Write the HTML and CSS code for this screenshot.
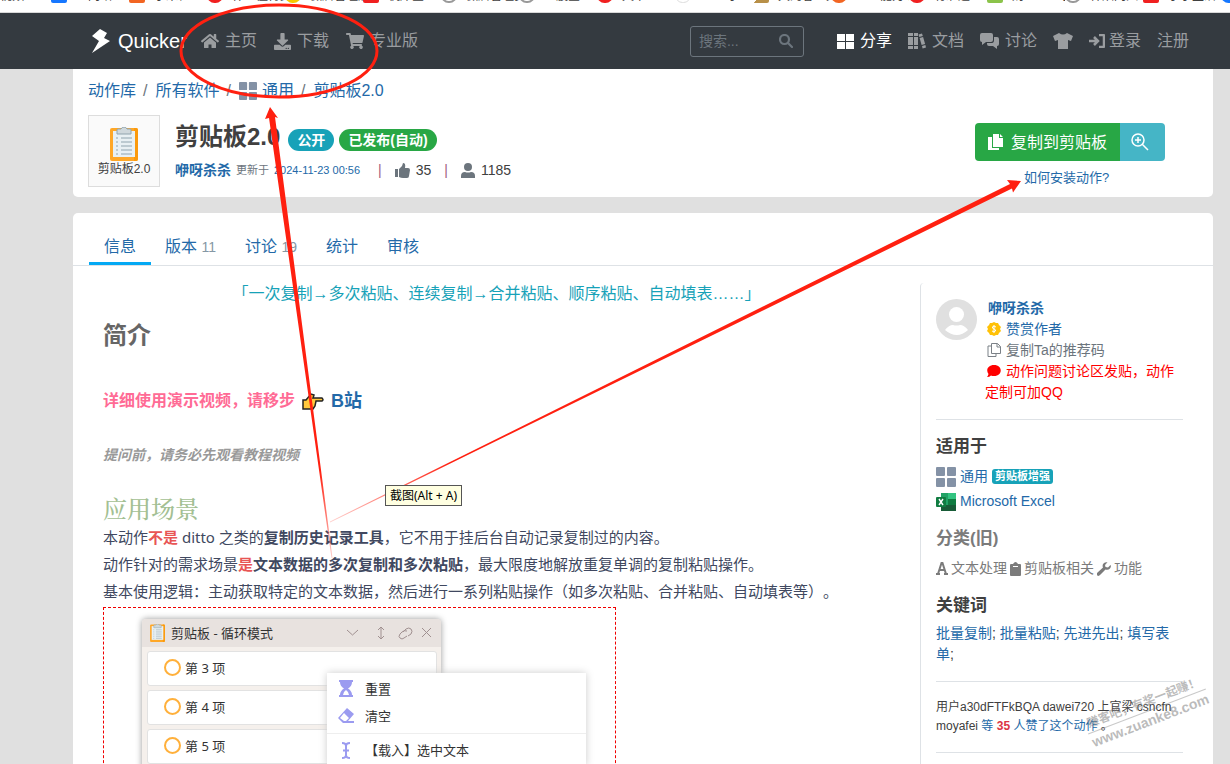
FILE: index.html
```html
<!DOCTYPE html>
<html lang="zh-CN">
<head>
<meta charset="utf-8">
<title>剪贴板2.0 - Quicker</title>
<link rel="stylesheet" href="styles.css">
</head>
<body>
<svg class="defs" aria-hidden="true">
  <symbol id="grid" viewBox="0 0 20 20"><path d="M0 1q0-1 1-1h7q1 0 1 1v7q0 1-1 1H1q-1 0-1-1zM11 1q0-1 1-1h7q1 0 1 1v7q0 1-1 1h-7q-1 0-1-1zM0 12q0-1 1-1h7q1 0 1 1v7q0 1-1 1H1q-1 0-1-1zM11 12q0-1 1-1h7q1 0 1 1v7q0 1-1 1h-7q-1 0-1-1z"/></symbol>
  <symbol id="clip" viewBox="0 0 28 34"><rect x="0" y="1" width="28" height="33" rx="2" fill="#ffa726"/><path d="M24 1h2q2 0 2 2v29q0 2-2 2h-2z" fill="#fb9a0c"/><rect x="3" y="4" width="22" height="26" fill="#e8f0f3"/><path d="M7 7V3q0-1 1-1h3q1-2 3-2t3 2h3q1 0 1 1v4z" fill="#cfd8dc" stroke="#90a4ae"/><path d="M6 11h2M6 15h2M6 19h2M6 23h2M6 27h2M11 11h11M11 15h11M11 19h11M11 23h11M11 27h11" stroke="#90a4ae"/></symbol>
</svg>
<div class="page">
  <div class="bookmarks">
    <span>视频</span><span><i class="blue"></i>王网站</span><span><i class="orange"></i>小米社</span><span><i class="red round"></i>什么值得买</span><span><i class="yellow round"></i>微店管理后</span><span><i class="red"></i>机床企业</span><span><i class="globe"></i>微店管理员</span><span><i class="globe"></i>个股企业工</span><span><i class="red round"></i>天下</span><span><i class="pale"></i>个个 小</span><span><i class="gold"></i>大淘客工具</span><span><i class="orange round"></i>一个能力下</span><span><i class="red round"></i>有准达人</span><span><i class="green"></i>购个个一小</span><span><i class="globe"></i>神烟网入</span><span><i class="red"></i>小小生活工</span><span><i class="blue round"></i></span>
  </div>

  <header class="navbar">
    <a class="brand" href="#"><svg width="18" height="24" viewBox="0 0 18 24"><path d="M8 0 0 7l7 5L0 24 18 12l-6-3 3-5z" fill="#fff"/></svg>Quicker</a>
    <nav class="nav">
      <a href="#"><svg width="18" height="16" viewBox="0 0 576 512"><path d="M280 148 96 300v164a16 16 0 0 0 16 16h112a16 16 0 0 0 16-16v-96h96v96a16 16 0 0 0 16 16h112a16 16 0 0 0 16-16V300L296 148a12 12 0 0 0-16 0zM572 251l-84-69V44a12 12 0 0 0-12-12h-56a12 12 0 0 0-12 12v72l-90-74a48 48 0 0 0-61 0L4 251a12 12 0 0 0-1 17l25 31a12 12 0 0 0 17 2L280 107a12 12 0 0 1 16 0l235 194a12 12 0 0 0 17-2l25-31a12 12 0 0 0-1-17z"/></svg>主页</a>
      <a href="#"><svg width="17" height="17" viewBox="0 0 512 512"><path d="M216 0h80c13 0 24 11 24 24v168h88c18 0 27 22 14 34L270 378c-7 7-20 7-28 0L90 226c-13-12-4-34 14-34h88V24c0-13 11-24 24-24zm296 376v112c0 13-11 24-24 24H24c-13 0-24-11-24-24V376c0-13 11-24 24-24h147l49 49c20 20 52 20 72 0l49-49h147c13 0 24 11 24 24zM388 464a20 20 0 1 0-40 0 20 20 0 0 0 40 0zm64 0a20 20 0 1 0-40 0 20 20 0 0 0 40 0z"/></svg>下载</a>
      <a href="#"><svg width="18" height="16" viewBox="0 0 576 512"><path d="m528 301 47-208a24 24 0 0 0-23-29H159L150 19A24 24 0 0 0 126 0H24A24 24 0 0 0 0 24v16a24 24 0 0 0 24 24h70l70 343a56 56 0 1 0 67 9h210a56 56 0 1 0 64-10l5-25a24 24 0 0 0-23-29H218l-7-32h294a24 24 0 0 0 23-19z"/></svg>专业版</a>
    </nav>
    <form class="search"><input type="text" placeholder="搜索..." aria-label="搜索"><button type="button" aria-label="搜索"><svg width="14" height="14" viewBox="0 0 14 14"><path d="M5.500 10a4.500 4.500 0 1 1 0-9 4.500 4.500 0 0 1 0 9zM9 9l4 4" fill="none" stroke="#6c757d" stroke-width="2.200" stroke-linecap="round"/></svg></button></form>
    <nav class="nav account">
      <a class="current" href="#"><svg width="17" height="15" viewBox="0 0 17 15"><path d="M0 0h8v7H0zM9 0h8v7H9zM0 8h8v7H0zM9 8h8v7H9z"/></svg>分享</a>
      <a href="#"><svg width="18" height="16" viewBox="0 0 18 16"><path d="M0 0h5v3H0zM0 4h5v8H0zM0 13h5v3H0zM6 0h4v3H6zM6 4h4v8H6zM6 13h4v3H6zM10.500 1.500l3.500-1 .8 2.500-3.500 1zM11.600 5l3.500-1 2 7-3.500 1zM14 13l3.400-1 .6 2.500-3.400 1z"/></svg>文档</a>
      <a href="#"><svg width="19" height="16" viewBox="0 0 19 16"><path d="M2 0h9q2 0 2 2v5q0 2-2 2H6l-4 3V9Q0 9 0 7V2q0-2 2-2zM14 4h3q2 0 2 2v5q0 2-2 2v3l-4-3H9q-2 0-2-2l0-1h5q2 0 2-3z"/></svg>讨论</a>
      <a href="#" aria-label="周边"><svg width="20" height="16" viewBox="0 0 20 16"><path d="M6 0q4 3 8 0l6 3-2 5-3-1v9H5V7L2 8 0 3z"/></svg></a>
      <a class="login" href="#"><svg width="16" height="14" viewBox="0 0 16 14"><path d="M0 7h9M5 3l4 4-4 4M10 1h4q1 0 1 1v10q0 1-1 1h-4" fill="none" stroke="#9a9da0" stroke-width="2.500"/></svg>登录</a>
      <a href="#">注册</a>
    </nav>
  </header>

  <main class="container">
    <section class="card summary">
      <nav class="crumbs"><a href="#">动作库</a><span>/</span><a href="#">所有软件</a><span>/</span><a href="#"><svg width="18" height="18" fill="#8492a6"><use href="#grid"/></svg>通用</a><span>/</span><a href="#">剪贴板2.0</a></nav>
      <div class="product">
        <div class="tile"><svg width="28" height="34"><use href="#clip"/></svg><span>剪贴板2.0</span></div>
        <div class="heading">
          <div class="title-row"><h1>剪贴板2.0</h1><span class="pill teal">公开</span><span class="pill">已发布(自动)</span></div>
          <div class="meta"><a class="author" href="#">咿呀杀杀</a><small>更新于</small><a class="date" href="#">2024-11-23 00:56</a><i>|</i><svg width="15" height="15" viewBox="0 0 15 15"><path d="M0 6h3v8H0zM4 6l3-3 1-3q3 0 2 5h3q2 0 2 2l-1 6q0 2-2 2H8q-2 0-4-1z"/></svg><span>35</span><i>|</i><svg width="14" height="15" viewBox="0 0 14 15"><circle cx="7" cy="4" r="4"/><path d="M0 15v-2q0-4 4-4 3 1 6 0 4 0 4 4v2z"/></svg><span>1185</span></div>
        </div>
        <div class="install">
          <div class="buttons"><button type="button" class="copy"><svg width="15" height="17" viewBox="0 0 15 17"><path d="M5 0h6v4h4v9H5zM12 0l3 3h-3zM0 3h4v11h7v2H0z" fill="#fff"/></svg>复制到剪贴板</button><button type="button" class="look" aria-label="查看"><svg width="18" height="18" viewBox="0 0 18 18"><path d="M13 7A6 6 0 1 1 1 7a6 6 0 0 1 12 0zM11.500 11.500 17 17M7 4v6M4 7h6" fill="none" stroke="#fff" stroke-width="1.500"/></svg></button></div>
          <a href="#">如何安装动作?</a>
        </div>
      </div>
    </section>

    <section class="card detail">
      <nav class="tabs"><a class="active" href="#">信息</a><a href="#">版本 <small>11</small></a><a href="#">讨论 <small>19</small></a><a href="#">统计</a><a href="#">审核</a></nav>
      <div class="columns">
        <article>
          <p class="slogan">「一次复制→多次粘贴、连续复制→合并粘贴、顺序粘贴、自动填表……」</p>
          <h2>简介</h2>
          <p class="video">详细使用演示视频，请移步 <svg width="22" height="18" viewBox="0 0 22 18"><path d="M1 8h3l5-6 3 1-1 3h9q2 2 0 3h-6l-1 5-2 3H1z" fill="#ffc83d" stroke="#222" stroke-width="1.500"/></svg> <a href="#">B站</a></p>
          <p class="hint">提问前，请务必先观看教程视频</p>
          <h3>应用场景</h3>
          <div class="copytext">
            <p>本动作<em>不是</em> ditto 之类的<b>复制历史记录工具</b>，它不用于挂后台自动记录复制过的内容。</p>
            <p>动作针对的需求场景<em>是</em><b>文本数据的多次复制和多次粘贴</b>，最大限度地解放重复单调的复制粘贴操作。</p>
            <p>基本使用逻辑：主动获取特定的文本数据，然后进行一系列粘贴操作（如多次粘贴、合并粘贴、自动填表等）。</p>
          </div>
          <div class="figure">
            <div class="window">
              <div class="window-bar"><svg width="15" height="18" viewBox="0 0 28 34"><use href="#clip"/></svg><span>剪贴板 - 循环模式</span>
                <svg width="84" height="14" viewBox="0 0 84 14" fill="none" stroke="#a09090"><path d="M0 4l5.500 5L11 4M34 1v12M31 4l3-3 3 3M31 10l3 3 3-3M75 2l9 9M84 2l-9 9"/><path d="M56 6l3-3q3-2 5 0t0 5l-3 2M60 5q-3-1-5 1l-2 2q-2 3 0 4 2 2 4 0l3-2"/></svg></div>
              <div class="item"><i></i>第 3 项</div>
              <div class="item"><i></i>第 4 项</div>
              <div class="item"><i></i>第 5 项</div>
            </div>
            <div class="popup">
              <div><svg width="14" height="17" viewBox="0 0 14 17"><path fill-rule="evenodd" d="M0 0h14v2h-1q0 4-4 6.500 4 2.500 4 6.500h1v2H0v-2h1q0-4 4-6.500Q1 6 1 2H0zM7 10q-3 2-3 5h6q0-3-3-5z"/></svg>重置</div>
              <div><svg width="17" height="15" viewBox="0 0 17 15"><path d="M9 0l7 6-6 7h6v2H5L0 10zM6 5l-4 5 4 3h2l3-3z" fill-rule="evenodd"/></svg>清空</div>
              <div class="split"><svg width="10" height="17" viewBox="0 0 10 17"><path d="M1 1q4 0 4 3v9q0 3-4 3M9 1q-4 0-4 3M9 16q-4 0-4-3M2 8.500h6" fill="none" stroke="#9b9bf0" stroke-width="2"/></svg>【载入】选中文本</div>
            </div>
          </div>
        </article>

        <aside>
          <div class="profile">
            <svg class="avatar" width="41" height="41" viewBox="0 0 41 41"><circle cx="20.500" cy="20.500" r="20.500" fill="#e0e0e0"/><circle cx="20.500" cy="15.500" r="7.500" fill="#fff"/><path d="M9 31q4-5 8-5 3.500 1 7 0 4 0 8 5-11 10-23 0z" fill="#fff"/></svg>
            <div class="profile-text">
              <a class="author" href="#">咿呀杀杀</a>
              <a href="#"><svg width="14" height="14" viewBox="0 0 14 14"><path d="M7 0l2 1 2 0 1 2 2 2-1 2 1 2-2 2-1 2H9l-2 1-2-1H3l-1-2-2-2 1-2-1-2 2-2 1-2h2z" fill="#ffc107"/><path d="M9 5Q7 3.500 5.500 4.800 5 6.500 7 7t1.500 2Q7 10.500 5 9M7 3v8" fill="none" stroke="#fff"/></svg>赞赏作者</a>
              <a class="muted" href="#"><svg width="14" height="14" viewBox="0 0 14 14"><path d="M4.500.5h6l3 3v7h-9zM10 .5V4h3.500M4.500 3H1v10.500h8V11" fill="none" stroke="#7b8187"/></svg>复制Ta的推荐码</a>
              <a class="notice" href="#"><svg width="14" height="14" viewBox="0 0 14 14"><path d="M7 1c9 0 9 11 0 11q-2 0-3-.5Q2.500 13 0 13q1-1 1.500-3C-1.500 6 1 1 7 1z"/></svg>动作问题讨论区发贴，动作定制可加QQ</a>
            </div>
          </div>
          <hr>
          <h4>适用于</h4>
          <div class="app"><svg width="20" height="20" fill="#8492a6"><use href="#grid"/></svg><a href="#">通用</a><span class="tag">剪贴板增强</span></div>
          <div class="app"><svg width="20" height="20" viewBox="0 0 20 20"><path d="M5 1h15v18H5z" fill="#21a366"/><path d="M12 1h8v6h-8z" fill="#33c481"/><path d="M5 13h15v6H5z" fill="#185c37"/><path d="M12 7h8v6h-8z" fill="#107c41"/><rect y="5" width="10" height="10" rx="1" fill="#107c41"/><path d="M3 7l4 6M7 7l-4 6" stroke="#fff" stroke-width="1.400"/></svg><a href="#">Microsoft Excel</a></div>
          <h4 class="old">分类(旧)</h4>
          <div class="cats"><svg width="12" height="13" viewBox="0 0 12 13"><path d="M0 12h4M8 12h4M2 12 5.500 1h1L10 12M4 8h5" fill="none" stroke="#7b7b7b" stroke-width="2"/></svg><a href="#">文本处理</a><svg width="11" height="14" viewBox="0 0 11 14"><path d="M0 3q0-1 1-1h2q2.500-4 5 0h2q1 0 1 1v10q0 1-1 1H1q-1 0-1-1zM3 4v1h5V4z" fill-rule="evenodd"/></svg><a href="#">剪贴板相关</a><svg width="14" height="14" viewBox="0 0 14 14"><path d="M13.500 3 11 5.500 8.500 5 8 3l2.500-2.700Q8 0 6.500 1.500T6 5.500L0 11q-.5 2 1 3 1 0 2-1l5.500-5.500Q11 8.500 13 6.500 14.500 4.500 13.500 3z"/></svg><a href="#">功能</a></div>
          <h4>关键词</h4>
          <p class="keywords"><a href="#">批量复制</a>; <a href="#">批量粘贴</a>; <a href="#">先进先出</a>; <a href="#">填写表单</a>;</p>
          <hr>
          <p class="likes">用户a30dFTFkBQA dawei720 上官梁 csncfn moyafei <a href="#">等 <b>35</b> 人赞了这个动作</a> 。</p>
          <hr>
        </aside>
      </div>
    </section>
  </main>

  <div class="watermark"><span>赚客吧，有奖一起赚！</span><span>www.zuanke8.com</span></div>
  <svg class="marks" width="1230" height="764" viewBox="0 0 1230 764">
    <defs>
      <linearGradient id="fade1" gradientUnits="userSpaceOnUse" x1="320" y1="470" x2="333" y2="560"><stop offset="0" stop-color="#ff2010"/><stop offset="1" stop-color="#ff2010" stop-opacity="0.200"/></linearGradient>
      <linearGradient id="fade2" gradientUnits="userSpaceOnUse" x1="450" y1="463" x2="330" y2="522"><stop offset="0" stop-color="#ff2010"/><stop offset="1" stop-color="#ff2010" stop-opacity="0.200"/></linearGradient>
    </defs>
    <ellipse cx="279" cy="51" rx="98" ry="46" fill="none" stroke="#ff2010" stroke-width="3"/>
    <path d="M270 107l-5 12 4-1 62.500 440h1L275 117l3 1z" fill="url(#fade1)"/>
    <path d="M1021 181l-14-1 3 4L330 521.500v1l682-334 1 4z" fill="url(#fade2)"/>
  </svg>
  <div class="tooltip" role="tooltip">截图(Alt + A)</div>
</div>
</body>
</html>
```

FILE: styles.css
```css
* { box-sizing: border-box; }
body {
  margin: 0;
  background: #e0e0e0;
  color: #404040;
  font: 14px/21px "Liberation Sans", "Noto Sans CJK SC", sans-serif;
  text-spacing-trim: space-all;
}
h1, h2, h3, h4, p { margin: 0; }
a { color: #2369a8; text-decoration: none; }
svg { flex: none; }
.defs { position: absolute; width: 0; height: 0; }
.page { position: relative; height: 100vh; overflow: hidden; }

.bookmarks {
  display: flex;
  height: 13px;
  overflow: hidden;
  background: #fff;
  border-bottom: 1px solid #d8d8d8;
  font-size: 12px;
  line-height: 16px;
  white-space: nowrap;
}
.bookmarks span { display: flex; flex: 0 0 78px; gap: 9px; height: 16px; margin-top: -12px; overflow: hidden; }
.bookmarks span:first-child { flex-basis: 51px; }
.bookmarks i { flex: none; width: 16px; height: 15px; border-radius: 2px; }
.bookmarks .round { border-radius: 8px; }
.blue { background: #1677ff; }
.orange { background: #f26522; }
.red { background: #f02020; }
.yellow { background: #f5c800; }
.gold { background: linear-gradient(135deg, #fff 50%, #b89048 50%); }
.green { background: #8bc34a; }
.bookmarks .globe { border: 2px solid #999; border-radius: 8px; }
.bookmarks .pale { border: 1px solid #ddd; border-radius: 8px; }

.navbar {
  display: flex;
  align-items: center;
  height: 56px;
  padding: 0 41px 0 92px;
  background: #343a40;
  font-size: 16px;
  line-height: 24px;
}
.brand { display: flex; align-items: center; gap: 8px; margin-right: 14px; color: #fff; font-size: 20px; }
.nav { display: flex; gap: 17px; }
.nav a { display: flex; align-items: center; gap: 6px; color: #9a9da0; fill: #9a9da0; }
.account { gap: 16px; }
.account .current { color: #fff; fill: #fff; }
.account .login { gap: 4px; }
.search {
  display: flex;
  align-items: center;
  width: 114px;
  height: 31px;
  margin: 0 33px 0 auto;
  border: 1px solid #6c757d;
  border-radius: 3px;
}
.search input { flex: 1; min-width: 0; padding: 0 8px; border: 0; outline: 0; background: none; color: #fff; font: inherit; font-size: 14px; }
.search input::placeholder { color: #6c757d; opacity: 1; }
.search button { display: flex; padding: 0 10px; border: 0; background: none; }

.container { padding: 0 17px 0 73px; }
.card { background: #fff; border-radius: 5px; }
.summary { height: 128px; padding: 10px 48px 10px 15px; border-radius: 0 0 5px 5px; }
.crumbs { display: flex; align-items: center; font-size: 16px; line-height: 24px; }
.crumbs span { padding: 0 8px 0 7px; color: #6c757d; }
.crumbs a { display: flex; align-items: center; gap: 5px; }
.product { display: flex; margin-top: 12px; }
.tile {
  display: flex;
  flex-direction: column;
  align-items: center;
  width: 72px;
  height: 72px;
  padding-top: 11px;
  border: 1px solid #ddd;
  background: #fafafa;
  font-size: 12px;
  line-height: 16px;
}
.heading { margin-left: 15px; }
.title-row { display: flex; align-items: center; gap: 5px; height: 44px; }
h1 { margin-right: 3px; font-size: 24px; line-height: 32px; }
.pill { margin-top: 6px; padding: 0 9px; border-radius: 11px; background: #28a745; color: #fff; font-weight: bold; line-height: 22px; }
.teal { background: #17a2b8; }
.meta { display: flex; align-items: center; height: 22px; fill: #6c757d; }
.author { font-weight: bold; }
.meta small, .date { margin-left: 5px; color: #6c757d; font-size: 11px; }
.meta .date { color: #2369a8; }
.meta i { margin: 0 13px; color: #a06080; font-style: normal; }
.meta .date + i { margin-left: 18px; }
.meta span { margin-left: 6px; }
.install { margin: 8px 0 0 auto; text-align: center; font-size: 13px; }
.install > a { padding-right: 7px; }
.buttons { display: flex; margin-bottom: 6px; }
.buttons button { display: flex; align-items: center; height: 38px; border: 0; color: #fff; font: inherit; font-size: 16px; }
.copy { gap: 8px; padding: 0 13px; border-radius: 4px 0 0 4px; background: #28a745; }
.look { padding: 0 16px 0 11px; border-radius: 0 4px 4px 0; background: #45b5c6; }
.install .look { width: 45px; }

.detail { margin-top: 16px; border-radius: 5px 5px 0 0; }
.tabs { display: flex; height: 53px; padding: 16px 16px 0; border-bottom: 1px solid #dee2e6; font-size: 16px; }
.tabs a { padding: 7px 15px 0; line-height: 22px; }
.tabs a + a { padding: 7px 15px 0 14px; }
.tabs .active { border-bottom: 3px solid #03a9f4; }
.tabs small { color: #8597a5; font-size: 14px; }
.columns { display: flex; padding-top: 17px; }
article { flex: 1; min-width: 0; padding: 0 15px 0 30px; }
.slogan { margin-left: -15px; color: #17a2b8; font-size: 16px; line-height: 22px; text-align: center; }
h2 { margin-top: 14px; color: #666; font-size: 24px; line-height: 34px; }
.video { display: flex; align-items: center; gap: 7px; margin-top: 34px; color: #ff6b95; font-size: 16px; font-weight: bold; line-height: 28px; }
.video a { font-size: 18px; }
.hint { margin-top: 30px; color: #999; font-style: italic; font-weight: bold; }
h3 { margin-top: 25px; color: #a3bf93; font: 500 24px/34px "Noto Serif CJK SC", "Noto Sans CJK SC", serif; }
.copytext { margin-top: -1px; color: #404860; font: 15px/27px "Noto Sans", "Noto Sans CJK SC", sans-serif; white-space: nowrap; }
.copytext em { color: #e85555; font-style: normal; font-weight: bold; }
.figure { position: relative; width: 513px; margin-top: 2px; padding: 11px 38px 0; border: 1px dashed #f00000; color: #333; font: 13px/18px "Noto Sans", "Noto Sans CJK SC", sans-serif; }
.window { width: 299px; padding-bottom: 4px; border-radius: 4px 4px 0 0; background: #f5f0ec; box-shadow: 0 0 6px #999; }
.window-bar { display: flex; align-items: center; gap: 6px; height: 28px; margin-bottom: 4px; padding: 0 10px 0 8px; border-radius: 4px 4px 0 0; background: #e8e2df; }
.window-bar svg:last-child { margin-left: auto; overflow: visible; }
.item { display: flex; align-items: center; gap: 4px; height: 35px; margin: 0 4px 4px 5px; padding: 0 0 2px 16px; border: 1px solid #e2e2e2; border-radius: 3px; background: #fff; }
.item i { width: 17px; height: 17px; border: 2px solid #ffb03b; border-radius: 9px; }
.popup { position: absolute; left: 223px; top: 65px; width: 259px; padding-top: 2px; background: #fff; box-shadow: 0 0 8px #ccc; }
.popup div { display: grid; grid-template-columns: 38px 1fr; align-items: center; height: 27px; fill: #9b9bf0; }
.popup svg { justify-self: center; }
.popup .split { height: 33px; margin-top: 4px; border-top: 1px solid #eee; }

aside { width: 293px; min-height: 540px; padding: 15px 30px 0 15px; border-left: 1px solid #dee2e6; border-radius: 4px 0 0 0; }
.profile { display: flex; gap: 8px; }
.avatar { margin-top: 1px; }
.profile-text a { display: block; }
.profile-text .author { padding-left: 3px; }
.profile-text svg { margin: 0 5px 0 2px; vertical-align: -2px; }
.profile-text .muted { color: #6c757d; }
.profile-text .notice { color: red; fill: red; }
hr { margin: 16px 0; border: 0; border-top: 1px solid #dee2e6; }
h4 { margin-bottom: 6px; font-size: 17px; line-height: 22px; }
.app { display: flex; align-items: center; gap: 4px; height: 25px; }
.tag { padding: 0 3px; border-radius: 3px; background: #17a2b8; color: #fff; font-size: 11px; font-weight: bold; line-height: 15px; }
.old { margin-top: 14px; color: #7b7b7b; }
.cats { display: flex; align-items: center; gap: 3px; height: 21px; margin: 8px 0 16px; fill: #7b7b7b; white-space: nowrap; }
.cats a { color: #7b7b7b; }
.likes { font-size: 12px; line-height: 19px; }
.likes b { color: #dc3545; }

.tooltip { position: absolute; left: 385px; top: 485px; padding: 0 4px; border: 1px solid #555; background: #ffffe1; color: #000; font: 12px/19px "Noto Sans", "Noto Sans CJK SC", sans-serif; white-space: nowrap; }
.marks { position: absolute; left: 0; top: 0; pointer-events: none; }
.watermark { position: absolute; left: 1084px; top: 693px; width: 126px; transform: rotate(-21deg); color: rgba(120, 120, 120, 0.5); font-size: 12px; font-weight: bold; line-height: 18px; text-align: center; white-space: nowrap; }
.watermark span { display: block; }
.watermark span + span { border-top: 1px solid rgba(120, 120, 120, 0.4); font-size: 14px; }
```
